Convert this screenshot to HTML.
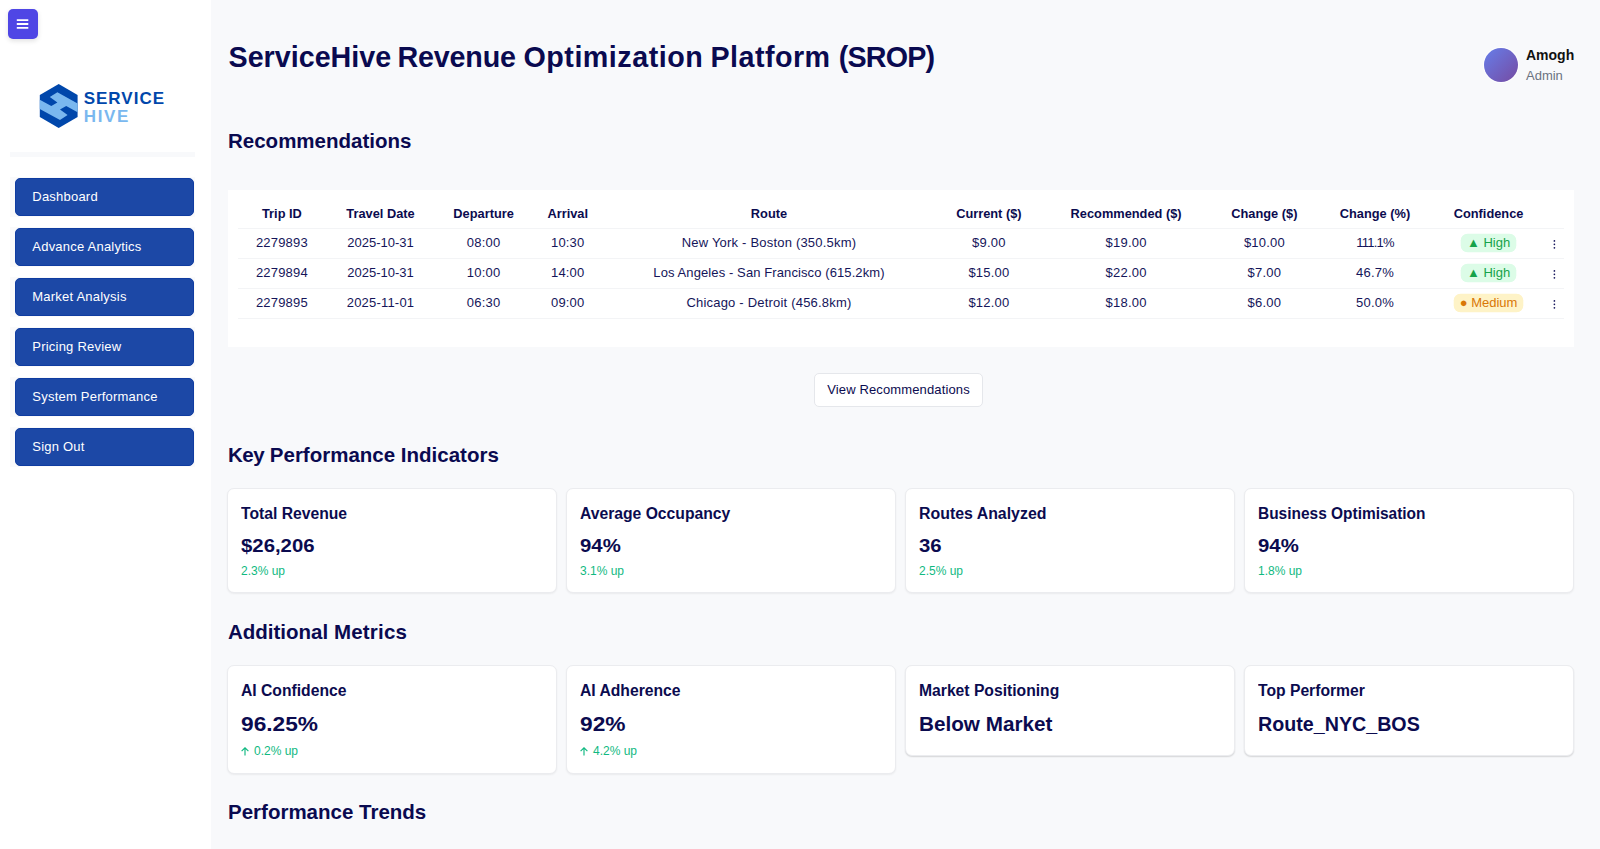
<!DOCTYPE html>
<html lang="en">
<head>
<meta charset="utf-8">
<title>ServiceHive Revenue Optimization Platform (SROP)</title>
<style>
*{box-sizing:border-box;margin:0;padding:0}
html,body{width:1600px;height:849px;overflow:hidden}
body{background:#f8f9fb;font-family:"Liberation Sans",sans-serif;color:#0b0b4f;position:relative}
.abs{position:absolute;white-space:nowrap}
#sidebar{position:absolute;left:0;top:0;width:211px;height:849px;background:#fff}
#burger{position:absolute;left:8px;top:9px;width:30px;height:30px;border-radius:5px;background:#4f46e5;box-shadow:0 2px 5px rgba(0,0,0,.12)}
.divider{position:absolute;left:10px;top:151.5px;width:185px;height:5px;background:#f8f9fb}
.navbg{position:absolute;left:10px;width:185px;height:39.5px;background:#fafafb}
.nav{position:absolute;left:15px;width:178.5px;height:37.5px;border-radius:5px;background:#1c48a6;border:1px solid #0f3ca1;color:#fff;font-size:13px;line-height:35px;padding-left:16.3px;letter-spacing:.22px}
h1{position:absolute;left:228.5px;top:38px;font-size:28.7px;line-height:38px;font-weight:bold;color:#0a0a50;white-space:nowrap}
h1 span{position:absolute;top:0}
h2{position:absolute;left:228px;font-size:20.5px;line-height:30px;font-weight:bold;color:#0a0a50;white-space:nowrap}
.card{position:absolute;background:#fff;border-radius:7px;border:1px solid #ebecef;box-shadow:0 1px 2px rgba(0,0,0,.06)}
.card.s2{box-shadow:0 1px 1.5px rgba(0,0,0,.14)}
.card div{position:absolute;left:13px;white-space:nowrap;transform-origin:0 50%}
.card .t{top:15px;font-size:16px;font-weight:bold;line-height:20px;transform:scaleX(.98)}
.card .v{top:44.5px;font-size:18.5px;font-weight:bold;line-height:24px}
.card .c{top:75.3px;font-size:12px;line-height:14px;color:#10b981}
.card .v2{top:46px;font-size:20.3px;font-weight:bold;line-height:24px}
.card .c2{top:78.2px;font-size:12px;line-height:14px;color:#10b981}
#tablecard{position:absolute;left:228px;top:190px;width:1346px;height:157px;background:#fff}
table{position:absolute;left:10px;top:9px;width:1326px;border-collapse:collapse;font-size:13px;text-align:center;table-layout:fixed;color:#15155a}
th{height:29px;font-weight:bold;font-size:12.8px;border-bottom:1px solid #f3f4f6;padding-top:0;color:#0b0b4f}
td{height:30px;border-bottom:1px solid #f3f4f6;letter-spacing:.2px;padding-bottom:1px}
.badge{display:inline-block;height:18px;line-height:18px;border-radius:6.5px;padding:0 5.6px;font-size:13px;letter-spacing:0;vertical-align:middle}
.hi{background:#dcfce7;color:#16a34a;box-shadow:0 0 0 .3px #dcfce7}
.med{background:#fef3c7;color:#d97706;box-shadow:0 0 0 .3px #fef3c7}
td.k{font-size:8px;font-weight:bold;letter-spacing:0}
#viewbtn{position:absolute;left:814px;top:373px;width:169px;height:33.5px;border:1px solid #e5e7eb;border-radius:5px;background:#fff;font-size:13px;line-height:31px;text-align:center;letter-spacing:.13px}
</style>
</head>
<body>
<div id="sidebar">
  <div id="burger"><svg width="30" height="30" viewBox="0 0 30 30" style="position:absolute;left:0;top:0"><path d="M8.8 11.2H20.3M8.8 15H20.3M8.8 18.8H20.3" stroke="#fff" stroke-width="1.8" fill="none"/></svg></div>
  <svg class="abs" style="left:36px;top:80px" width="46" height="52" viewBox="36 80 46 52">
    <polygon points="58.7,84 77.6,95 77.6,117 58.7,128 39.8,117 39.8,95" fill="#0047ab"/>
    <polygon points="39.8,99.75 51.3,106 57.4,102.4 49.8,97.1 57.4,92.2 77.6,103.4 77.6,112.3 66.2,106 60,109.6 67.6,114.9 60,119.9 39.8,109" fill="#7ab8ef"/>
  </svg>
  <div class="abs" style="left:83.7px;top:89.1px;font-size:17px;font-weight:bold;color:#0047ab;letter-spacing:1px;line-height:20px">SERVICE</div>
  <div class="abs" style="left:83.8px;top:107.2px;font-size:17px;font-weight:bold;color:#7ab8ef;letter-spacing:1.6px;line-height:20px">HIVE</div>
  <div class="divider"></div>
  <div class="navbg" style="top:177px"></div><div class="nav" style="top:178px">Dashboard</div>
  <div class="navbg" style="top:227px"></div><div class="nav" style="top:228px">Advance Analytics</div>
  <div class="navbg" style="top:277px"></div><div class="nav" style="top:278px">Market Analysis</div>
  <div class="navbg" style="top:327px"></div><div class="nav" style="top:328px">Pricing Review</div>
  <div class="navbg" style="top:377px"></div><div class="nav" style="top:378px">System Performance</div>
  <div class="navbg" style="top:427px"></div><div class="nav" style="top:428px">Sign Out</div>
</div>

<h1><span style="left:0">ServiceHive</span> <span style="left:169.1px;letter-spacing:-.2px">Revenue</span> <span style="left:295px;letter-spacing:.5px">Optimization</span> <span style="left:482px;letter-spacing:.45px">Platform</span> <span style="left:610.2px;letter-spacing:-.8px">(SROP)</span></h1>

<div class="abs" style="left:1484px;top:48px;width:34px;height:34px;border-radius:50%;background:linear-gradient(135deg,#667eea,#764ba2);box-shadow:0 0 0 1px rgba(255,255,255,.85)"></div>
<div class="abs" style="left:1526px;top:46px;font-size:14px;font-weight:bold;color:#111;line-height:18px">Amogh</div>
<div class="abs" style="left:1526px;top:68px;font-size:13px;color:#6b7280;line-height:16px">Admin</div>

<h2 style="top:126px">Recommendations</h2>

<div id="tablecard">
<table>
<colgroup><col style="width:87.8px"><col style="width:109.4px"><col style="width:96.8px"><col style="width:71.5px"><col style="width:331px"><col style="width:108.8px"><col style="width:165.6px"><col style="width:111px"><col style="width:110.2px"><col style="width:117px"><col style="width:16.9px"></colgroup>
<tr><th>Trip ID</th><th>Travel Date</th><th>Departure</th><th>Arrival</th><th>Route</th><th>Current ($)</th><th>Recommended ($)</th><th>Change ($)</th><th>Change (%)</th><th>Confidence</th><th></th></tr>
<tr><td>2279893</td><td style="letter-spacing:0">2025-10-31</td><td>08:00</td><td>10:30</td><td>New York - Boston (350.5km)</td><td>$9.00</td><td>$19.00</td><td>$10.00</td><td style="letter-spacing:-.8px">111.1%</td><td><span class="badge hi">▲ High</span></td><td class="k"><svg width="6" height="12" viewBox="-1 -1 6 12" style="vertical-align:middle;margin-left:-3.2px"><circle cx="2.4" cy="2.9" r=".85" fill="#15155a"/><circle cx="2.4" cy="6.35" r=".85" fill="#15155a"/><circle cx="2.4" cy="9.8" r=".85" fill="#15155a"/></svg></td></tr>
<tr><td>2279894</td><td style="letter-spacing:0">2025-10-31</td><td>10:00</td><td>14:00</td><td style="letter-spacing:.1px">Los Angeles - San Francisco (615.2km)</td><td>$15.00</td><td>$22.00</td><td>$7.00</td><td>46.7%</td><td><span class="badge hi">▲ High</span></td><td class="k"><svg width="6" height="12" viewBox="-1 -1 6 12" style="vertical-align:middle;margin-left:-3.2px"><circle cx="2.4" cy="2.9" r=".85" fill="#15155a"/><circle cx="2.4" cy="6.35" r=".85" fill="#15155a"/><circle cx="2.4" cy="9.8" r=".85" fill="#15155a"/></svg></td></tr>
<tr><td>2279895</td><td>2025-11-01</td><td>06:30</td><td>09:00</td><td>Chicago - Detroit (456.8km)</td><td>$12.00</td><td>$18.00</td><td>$6.00</td><td>50.0%</td><td><span class="badge med">● Medium</span></td><td class="k"><svg width="6" height="12" viewBox="-1 -1 6 12" style="vertical-align:middle;margin-left:-3.2px"><circle cx="2.4" cy="2.9" r=".85" fill="#15155a"/><circle cx="2.4" cy="6.35" r=".85" fill="#15155a"/><circle cx="2.4" cy="9.8" r=".85" fill="#15155a"/></svg></td></tr>
</table>
</div>

<div id="viewbtn">View Recommendations</div>

<h2 style="top:439.5px"><span style="letter-spacing:-.5px">Key</span> Performance Indicators</h2>
<div class="card" style="left:227px;top:488px;width:330px;height:105px"><div class="t">Total Revenue</div><div class="v" style="transform:scaleX(1.1)">$26,206</div><div class="c">2.3% up</div></div>
<div class="card" style="left:566px;top:488px;width:330px;height:105px"><div class="t">Average Occupancy</div><div class="v" style="transform:scaleX(1.1)">94%</div><div class="c">3.1% up</div></div>
<div class="card" style="left:905px;top:488px;width:330px;height:105px"><div class="t" style="transform:scaleX(.993)">Routes Analyzed</div><div class="v" style="transform:scaleX(1.1)">36</div><div class="c">2.5% up</div></div>
<div class="card" style="left:1244px;top:488px;width:330px;height:105px"><div class="t" style="transform:scaleX(.966)">Business Optimisation</div><div class="v" style="transform:scaleX(1.1)">94%</div><div class="c">1.8% up</div></div>

<h2 style="top:616.5px">Additional <span style="letter-spacing:.2px">Metrics</span></h2>
<div class="card" style="left:227px;top:665px;width:330px;height:108.5px"><div class="t">AI Confidence</div><div class="v2" style="transform:scaleX(1.12)">96.25%</div><div class="c2"><svg width="8" height="9" viewBox="0 0 8 9" style="vertical-align:-0.5px;margin-right:5px"><path d="M4 8.6V0.9M0.6 4.2L4 0.8L7.4 4.2" stroke="#10b981" stroke-width="1.15" fill="none"/></svg>0.2% up</div></div>
<div class="card" style="left:566px;top:665px;width:330px;height:108.5px"><div class="t">AI Adherence</div><div class="v2" style="transform:scaleX(1.12)">92%</div><div class="c2"><svg width="8" height="9" viewBox="0 0 8 9" style="vertical-align:-0.5px;margin-right:5px"><path d="M4 8.6V0.9M0.6 4.2L4 0.8L7.4 4.2" stroke="#10b981" stroke-width="1.15" fill="none"/></svg>4.2% up</div></div>
<div class="card s2" style="left:905px;top:665px;width:330px;height:91px"><div class="t">Market Positioning</div><div class="v2" style="transform:scaleX(1.02)">Below Market</div></div>
<div class="card s2" style="left:1244px;top:665px;width:330px;height:91px"><div class="t">Top Performer</div><div class="v2" style="transform:scaleX(.97)">Route_NYC_BOS</div></div>

<h2 style="top:797px">Performance Trends</h2>
</body>
</html>
